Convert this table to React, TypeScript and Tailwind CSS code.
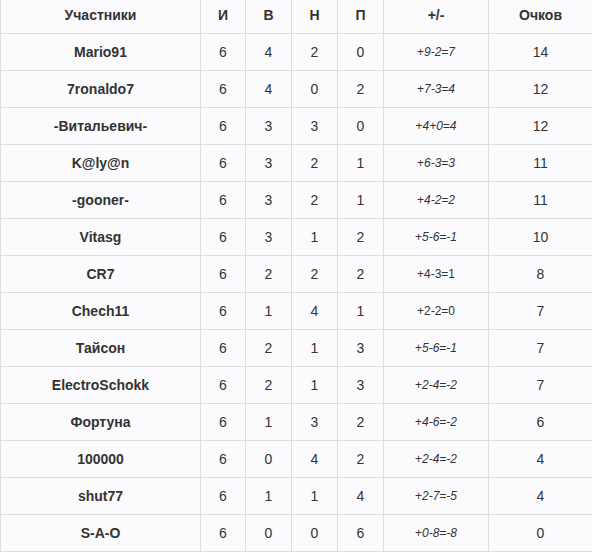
import React from "react";

type Row = { name: string; i: number; w: number; d: number; l: number; diff: [string, string, boolean]; pts: number };

const rows: Row[] = [
  { name: "Mario91", i: 6, w: 4, d: 2, l: 0, diff: ["+", "9-2=7", true], pts: 14 },
  { name: "7ronaldo7", i: 6, w: 4, d: 0, l: 2, diff: ["+", "7-3=4", true], pts: 12 },
  { name: "-Витальевич-", i: 6, w: 3, d: 3, l: 0, diff: ["+", "4+0=4", true], pts: 12 },
  { name: "K@ly@n", i: 6, w: 3, d: 2, l: 1, diff: ["+", "6-3=3", true], pts: 11 },
  { name: "-gooner-", i: 6, w: 3, d: 2, l: 1, diff: ["+", "4-2=2", true], pts: 11 },
  { name: "Vitasg", i: 6, w: 3, d: 1, l: 2, diff: ["+", "5-6=-1", true], pts: 10 },
  { name: "CR7", i: 6, w: 2, d: 2, l: 2, diff: ["+", "4-3=1", false], pts: 8 },
  { name: "Chech11", i: 6, w: 1, d: 4, l: 1, diff: ["+", "2-2=0", false], pts: 7 },
  { name: "Тайсон", i: 6, w: 2, d: 1, l: 3, diff: ["+", "5-6=-1", true], pts: 7 },
  { name: "ElectroSchokk", i: 6, w: 2, d: 1, l: 3, diff: ["+", "2-4=-2", true], pts: 7 },
  { name: "Фортуна", i: 6, w: 1, d: 3, l: 2, diff: ["+", "4-6=-2", true], pts: 6 },
  { name: "100000", i: 6, w: 0, d: 4, l: 2, diff: ["+", "2-4=-2", true], pts: 4 },
  { name: "shut77", i: 6, w: 1, d: 1, l: 4, diff: ["+", "2-7=-5", true], pts: 4 },
  { name: "S-A-O", i: 6, w: 0, d: 0, l: 6, diff: ["+", "0-8=-8", true], pts: 0 },
];

const headers = ["Участники", "И", "В", "Н", "П", "+/-", "Очков"];

export default function App() {
  const cell = "flex items-center justify-center border-b border-r border-[#dddddd]";
  return (
    <div className="w-[592px] h-[556px] bg-white text-[#333333]" style={{ fontFamily: '"Liberation Sans", Arial, sans-serif' }}>
      <div className="grid grid-cols-[201px_45px_46px_46px_46px_105px_1fr] bg-[#fbfbfe]">
        {headers.map((h, idx) => (
          <div
            key={h}
            className={`${cell} h-[34px] pb-[3px] text-[14px] font-bold ${idx === 0 ? "border-l" : ""} ${idx === 6 ? "border-r-0" : ""}`}
          >
            {h}
          </div>
        ))}
        {rows.map((r) => (
          <React.Fragment key={r.name}>
            <div className={`${cell} border-l h-[37px] text-[14px] font-bold`}>{r.name}</div>
            <div className={`${cell} h-[37px] text-[14px]`}>{r.i}</div>
            <div className={`${cell} h-[37px] text-[14px]`}>{r.w}</div>
            <div className={`${cell} h-[37px] text-[14px]`}>{r.d}</div>
            <div className={`${cell} h-[37px] text-[14px]`}>{r.l}</div>
            <div className={`${cell} h-[37px] text-[12px]`}>
              <span>{r.diff[0]}</span>
              <span className={r.diff[2] ? "italic" : ""}>{r.diff[1]}</span>
            </div>
            <div className={`${cell} border-r-0 h-[37px] text-[14px]`}>{r.pts}</div>
          </React.Fragment>
        ))}
      </div>
    </div>
  );
}
